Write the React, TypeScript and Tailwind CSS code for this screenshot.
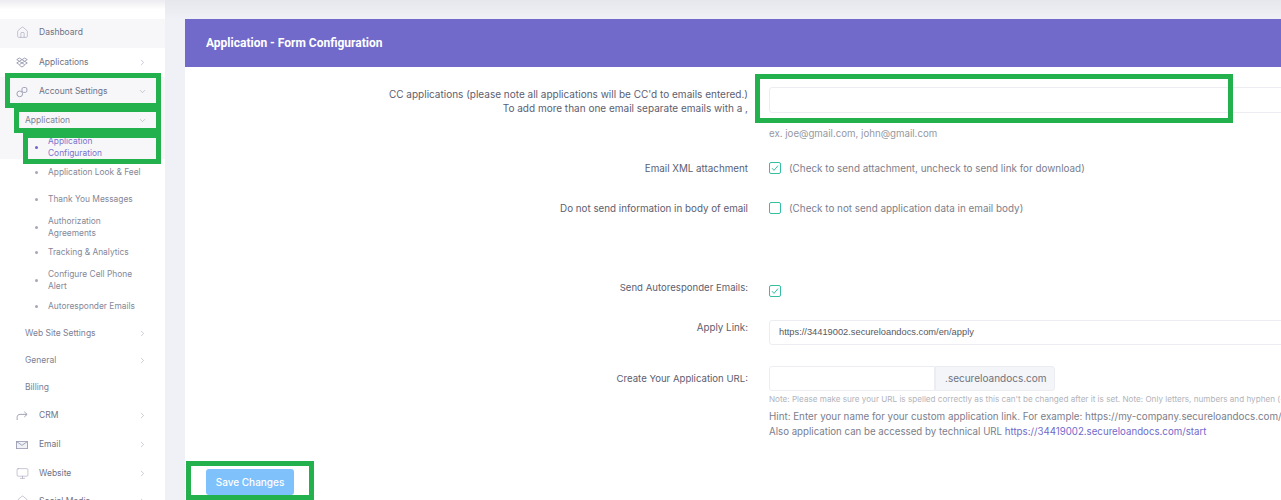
import { ChevronDown, ChevronRight, Home, Monitor } from "lucide-react"
import type { ReactNode } from "react"

const font = "font-['Inter','Liberation_Sans',sans-serif]"

function DropIcon() {
  return (
    <svg width="12" height="11" viewBox="0 0 16 14" fill="none" stroke="#9699b0" strokeWidth="1.2">
      <path d="M4.5 1 8 3.2 4.5 5.4 1 3.2Z" />
      <path d="M11.5 1 15 3.2 11.5 5.4 8 3.2Z" />
      <path d="M4.5 5.4 8 7.6 4.5 9.8 1 7.6Z" />
      <path d="M11.5 5.4 15 7.6 11.5 9.8 8 7.6Z" />
      <path d="M4.5 10.8 8 13 11.5 10.8" />
    </svg>
  )
}

function LinkIcon() {
  return (
    <svg width="12" height="12" viewBox="0 0 16 16" fill="none" stroke="#9699b0" strokeWidth="1.2">
      <circle cx="5" cy="10.5" r="3.8" />
      <rect x="8" y="2" width="6.5" height="6.5" rx="2" />
    </svg>
  )
}

function ShareIcon() {
  return (
    <svg width="12" height="11" viewBox="0 0 16 14" fill="none" stroke="#9699b0" strokeWidth="1.2">
      <path d="M1.5 13V9.5C1.5 7 3 5.5 5.5 5.5H14.5" />
      <path d="M11 2 14.8 5.5 11 9" />
    </svg>
  )
}

function MailIcon() {
  return (
    <svg width="12" height="8" viewBox="0 0 16 11" fill="none" stroke="#9699b0" strokeWidth="1.2">
      <rect x="0.5" y="0.5" width="15" height="10" fill="#f1f2f6" />
      <path d="M1 1 8 6 15 1" />
    </svg>
  )
}

function Chevron({ kind }: { kind?: "right" | "down" }) {
  if (kind === "right") return <ChevronRight size={9} strokeWidth={1.5} className="text-[#a3a6b4]" />
  if (kind === "down") return <ChevronDown size={9} strokeWidth={1.5} className="text-[#a3a6b4]" />
  return null
}

function NavRow({
  icon,
  label,
  chevron,
  active,
  h,
}: {
  icon: ReactNode
  label: string
  chevron?: "right" | "down"
  active?: boolean
  h: string
}) {
  return (
    <div className={`flex items-center pl-[12px] pr-[18px] ${h} ${active ? "bg-[#f7f7fa]" : ""}`}>
      <span className="flex w-[20px] justify-center">{icon}</span>
      <span className="ml-[7px] flex-1 text-[8.5px] text-[#6f7285]">{label}</span>
      <Chevron kind={chevron} />
    </div>
  )
}

function SubRow({ label, chevron, h, active }: { label: string; chevron?: "right" | "down"; h: string; active?: boolean }) {
  return (
    <div className={`flex items-center pl-[25px] pr-[18px] ${h} ${active ? "bg-[#f7f7fa]" : ""}`}>
      <span className="flex-1 text-[8.5px] text-[#7d8093]">{label}</span>
      <Chevron kind={chevron} />
    </div>
  )
}

function Leaf({ lines, h, active }: { lines: string[]; h: string; active?: boolean }) {
  return (
    <div className={`flex items-center pl-[35px] ${h} ${active ? "bg-[#f7f7fa]" : ""}`}>
      <span className={`h-[3px] w-[3px] rounded-full ${active ? "bg-[#6c63c9]" : "bg-[#a5a8b6]"}`} />
      <span className={`ml-[10px] text-[8.4px] leading-[12px] ${active ? "text-[#7a72cc]" : "text-[#858899]"}`}>
        {lines.map((l) => (
          <span key={l} className="block whitespace-nowrap">
            {l}
          </span>
        ))}
      </span>
    </div>
  )
}

function Sidebar() {
  return (
    <aside className="w-[165px] shrink-0 bg-white">
      <div className="h-[19px] bg-gradient-to-b from-[#ececf1] via-white to-white" />
      <NavRow icon={<Home size={13} strokeWidth={1} className="text-[#9699b0]" />} label="Dashboard" h="h-[29px] pb-[2px]" active />
      <NavRow icon={<DropIcon />} label="Applications" chevron="right" h="h-[29px]" />
      <NavRow icon={<LinkIcon />} label="Account Settings" chevron="down" h="h-[29px]" active />
      <SubRow label="Application" chevron="down" h="h-[27px] pt-[2px]" active />
      <Leaf lines={["Application", "Configuration"]} h="h-[26px] pt-[2px]" active />
      <Leaf lines={["Application Look & Feel"]} h="h-[26px]" />
      <Leaf lines={["Thank You Messages"]} h="h-[28px]" />
      <Leaf lines={["Authorization", "Agreements"]} h="h-[26px] pt-[2px]" />
      <Leaf lines={["Tracking & Analytics"]} h="h-[26px]" />
      <Leaf lines={["Configure Cell Phone", "Alert"]} h="h-[28px] pt-[2px]" />
      <Leaf lines={["Autoresponder Emails"]} h="h-[26px]" />
      <SubRow label="Web Site Settings" chevron="right" h="h-[26px] pt-[2px]" />
      <SubRow label="General" chevron="right" h="h-[28px] pt-[2px]" />
      <SubRow label="Billing" h="h-[26px] pt-[2px]" />
      <NavRow icon={<ShareIcon />} label="CRM" chevron="right" h="h-[30px] pt-[2px]" />
      <NavRow icon={<MailIcon />} label="Email" chevron="right" h="h-[29px] pt-[2px]" />
      <NavRow icon={<Monitor size={13} strokeWidth={1} className="text-[#9699b0]" />} label="Website" chevron="right" h="h-[29px] pt-[2px]" />
      <NavRow icon={<Home size={13} strokeWidth={1} className="text-[#9699b0]" />} label="Social Media" chevron="right" h="h-[29px]" />
    </aside>
  )
}

function Row({ label, h, children, size = "text-[9.8px]" }: { label: ReactNode; h: string; children: ReactNode; size?: string }) {
  return (
    <div className={`flex ${h}`}>
      <div className={`w-[563px] shrink-0 text-right leading-[14px] text-[#5c5e70] ${size}`}>{label}</div>
      <div className="ml-[21px] flex-1">{children}</div>
    </div>
  )
}

function Check({ checked }: { checked?: boolean }) {
  return (
    <span className="flex h-[12px] w-[12px] items-center justify-center rounded-[2px] border border-[#34bfa3] bg-white">
      {checked && (
        <svg width="8" height="8" viewBox="0 0 8 8" fill="none" stroke="#34bfa3" strokeWidth="1">
          <path d="M1 4.2 3 6.4 7 1.6" />
        </svg>
      )}
    </span>
  )
}

function Form() {
  return (
    <div className="min-w-0 flex-1">
      <div className="h-[19px] bg-gradient-to-b from-[#e6e7ec] to-[#f0f1f6]" />
      <div className="pl-[20px]">
        <div className="flex h-[48px] items-center bg-[#716aca] pb-[1px] pl-[21px] font-['Roboto',sans-serif] text-[12px] font-bold text-white">
          Application - Form Configuration
        </div>
        <div className="h-[433px] bg-white pt-[18px]">
          <Row
            h="h-[75px]"
            size="text-[10px]"
            label={
              <div className="pt-[2px]">
                <div className="whitespace-nowrap">CC applications (please note all applications will be CC'd to emails entered.)</div>
                <div>To add more than one email separate emails with a ,</div>
              </div>
            }
          >
            <div className="mt-[2px] h-[26px] w-[600px] rounded-[3px] border border-[#ebedf2] bg-white" />
            <div className="mt-[14px] text-[9.7px] leading-[14px] text-[#9699a2]">ex. joe@gmail.com, john@gmail.com</div>
          </Row>
          <Row h="h-[40px]" label={<div className="pt-[2px]">Email XML attachment</div>}>
            <div className="flex h-[16px] items-center gap-[8px] text-[9.9px] text-[#7b7e8c]">
              <Check checked />
              (Check to send attachment, uncheck to send link for download)
            </div>
          </Row>
          <Row h="h-[80px]" label={<div className="pt-[2px]">Do not send information in body of email</div>}>
            <div className="flex h-[16px] items-center gap-[8px] text-[9.9px] text-[#7b7e8c]">
              <Check />
              (Check to not send application data in email body)
            </div>
          </Row>
          <Row h="h-[40px]" size="text-[9.6px]" label={<div className="pt-[1px]">Send Autoresponder Emails:</div>}>
            <div className="pt-[5px]">
              <Check checked />
            </div>
          </Row>
          <Row h="h-[46px]" label={<div className="pt-[1px]">Apply Link:</div>}>
            <div className="flex h-[25px] w-[600px] items-center rounded-[3px] border border-[#ebedf2] pl-[9px] font-['Liberation_Sans',sans-serif] text-[9.3px] text-[#575962]">
              https://34419002.secureloandocs.com/en/apply
            </div>
          </Row>
          <Row h="h-[100px]" size="text-[9.6px]" label={<div className="pt-[6px]">Create Your Application URL:</div>}>
            <div className="flex h-[25px] w-[286px]">
              <div className="w-[166px] rounded-l-[3px] border border-[#ebedf2]" />
              <div className="flex flex-1 items-center rounded-r-[3px] border border-[#ebedf2] bg-[#f4f5f8] pl-[9px] text-[10px] text-[#6f727d]">
                .secureloandocs.com
              </div>
            </div>
            <div className="mt-[1px] whitespace-nowrap text-[8.15px] leading-[14px] text-[#b2b4bb]">
              Note: Please make sure your URL is spelled correctly as this can't be changed after it is set. Note: Only letters, numbers and hyphen (-) are allowed.
            </div>
            <div className="mt-[3px] whitespace-nowrap text-[9.8px] leading-[15px] text-[#7b7e8c]">
              Hint: Enter your name for your custom application link. For example: https://my-company.secureloandocs.com/
            </div>
            <div className="whitespace-nowrap text-[9.7px] leading-[15px] text-[#7b7e8c]">
              Also application can be accessed by technical URL <span className="text-[#716aca]">https://34419002.secureloandocs.com/start</span>
            </div>
          </Row>
          <div className="pl-[21px] pt-[3px]">
            <button className="block h-[26px] w-[88px] rounded-[3px] bg-[#7fc1fb] text-[10px] font-medium text-white">Save Changes</button>
          </div>
        </div>
      </div>
    </div>
  )
}

export default function App() {
  return (
    <div className={`relative flex h-[500px] w-[1281px] overflow-hidden bg-[#f0f1f7] ${font}`}>
      <Sidebar />
      <Form />
      {/* green annotation boxes drawn over the screenshot */}
      <div className="absolute left-[5px] top-[73px] h-[35px] w-[156px] border-[5px] border-[#22b14c]" />
      <div className="absolute left-[14px] top-[107px] h-[26px] w-[147px] border-[5px] border-[#22b14c]" />
      <div className="absolute left-[23px] top-[133px] h-[31px] w-[138px] border-[5px] border-[#22b14c]" />
      <div className="absolute left-[755px] top-[74px] h-[49px] w-[478px] border-[5px] border-[#22b14c]" />
      <div className="absolute left-[186px] top-[461px] h-[39px] w-[128px] border-[5px] border-[#22b14c]" />
    </div>
  )
}
